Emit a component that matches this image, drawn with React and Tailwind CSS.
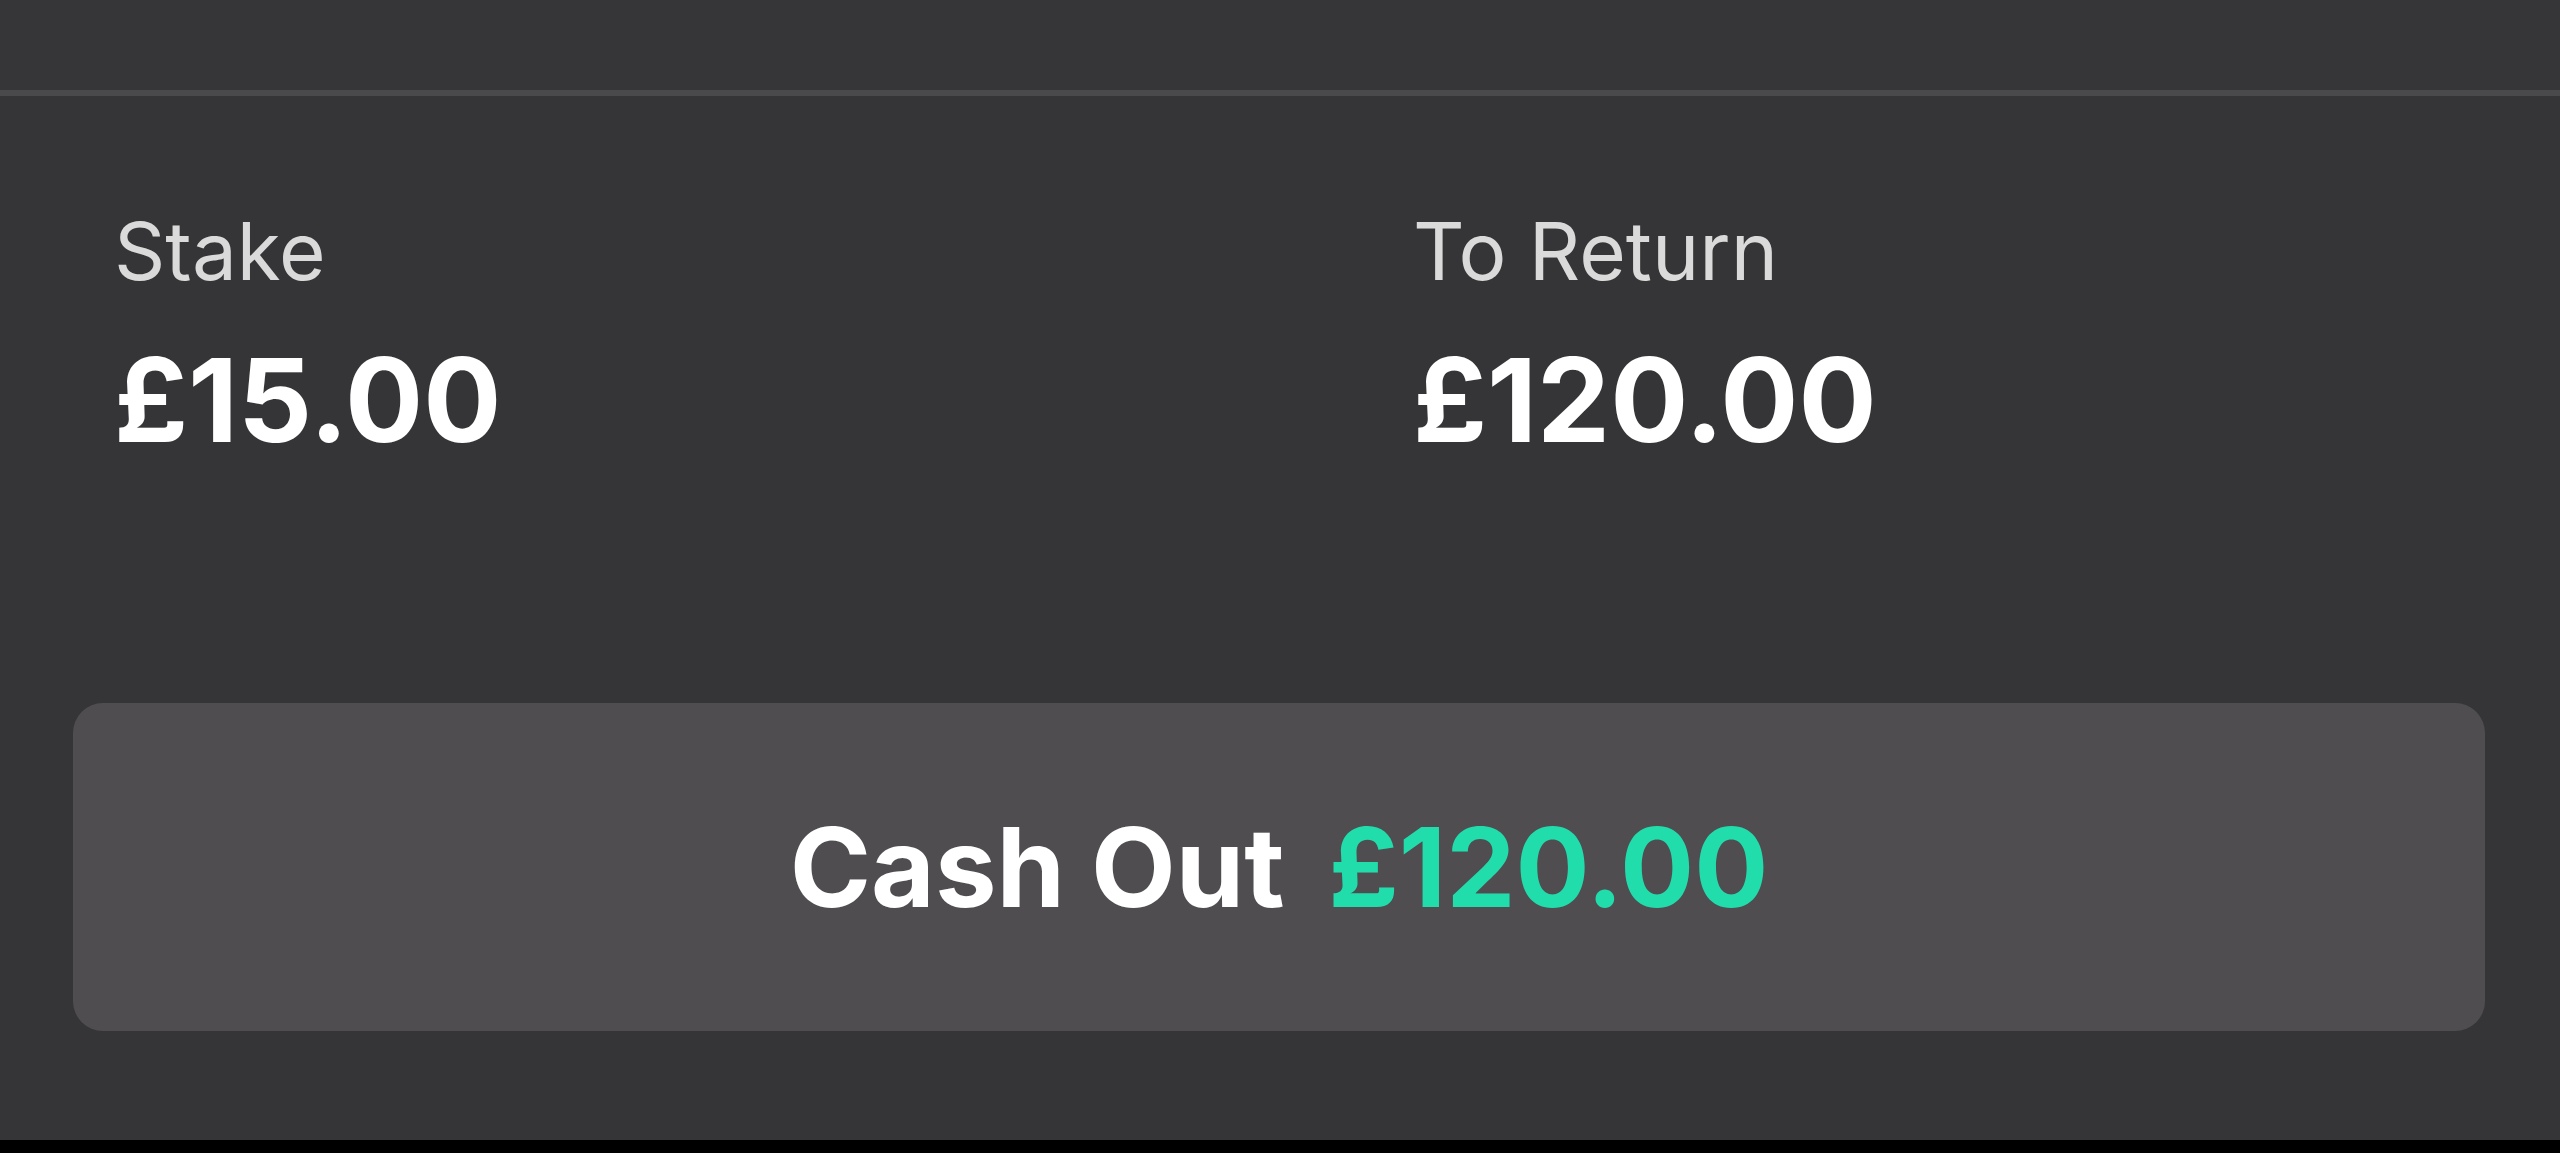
export default function App() {
  const font = { fontFamily: "Inter, 'Noto Sans', sans-serif" };

  return (
    <div
      className="w-[2560px] h-[1153px] flex flex-col bg-[#353537] overflow-hidden"
      style={font}
    >
      {/* top strip + divider */}
      <div className="h-[90px] bg-[#363638]" />
      <div className="h-[6px] bg-[#4a4a4c]" />

      {/* stake / return */}
      <div className="flex pl-[114px] pt-[115px]">
        <div className="w-[1299px] flex flex-col">
          <span className="text-[80px] leading-none text-[#dadada]">Stake</span>
          <span className="mt-[51px] text-[116px] leading-none font-bold text-white">
            £15.00
          </span>
        </div>
        <div className="flex flex-col">
          <span className="text-[80px] leading-none text-[#dadada]">To Return</span>
          <span className="mt-[51px] text-[116px] leading-none font-bold text-white">
            £120.00
          </span>
        </div>
      </div>

      {/* cash out button */}
      <div className="px-[73px] pt-[245px]">
        <button className="w-[2412px] h-[328px] rounded-[30px] bg-[#4f4d50] flex items-center justify-center gap-[44px]">
          <span className="text-[110px] leading-none font-bold text-white">Cash Out</span>
          <span className="text-[110px] leading-none font-bold text-[#21ddac]">£120.00</span>
        </button>
      </div>

      <div className="flex-1" />
      <div className="h-[13px] bg-black" />
    </div>
  );
}
